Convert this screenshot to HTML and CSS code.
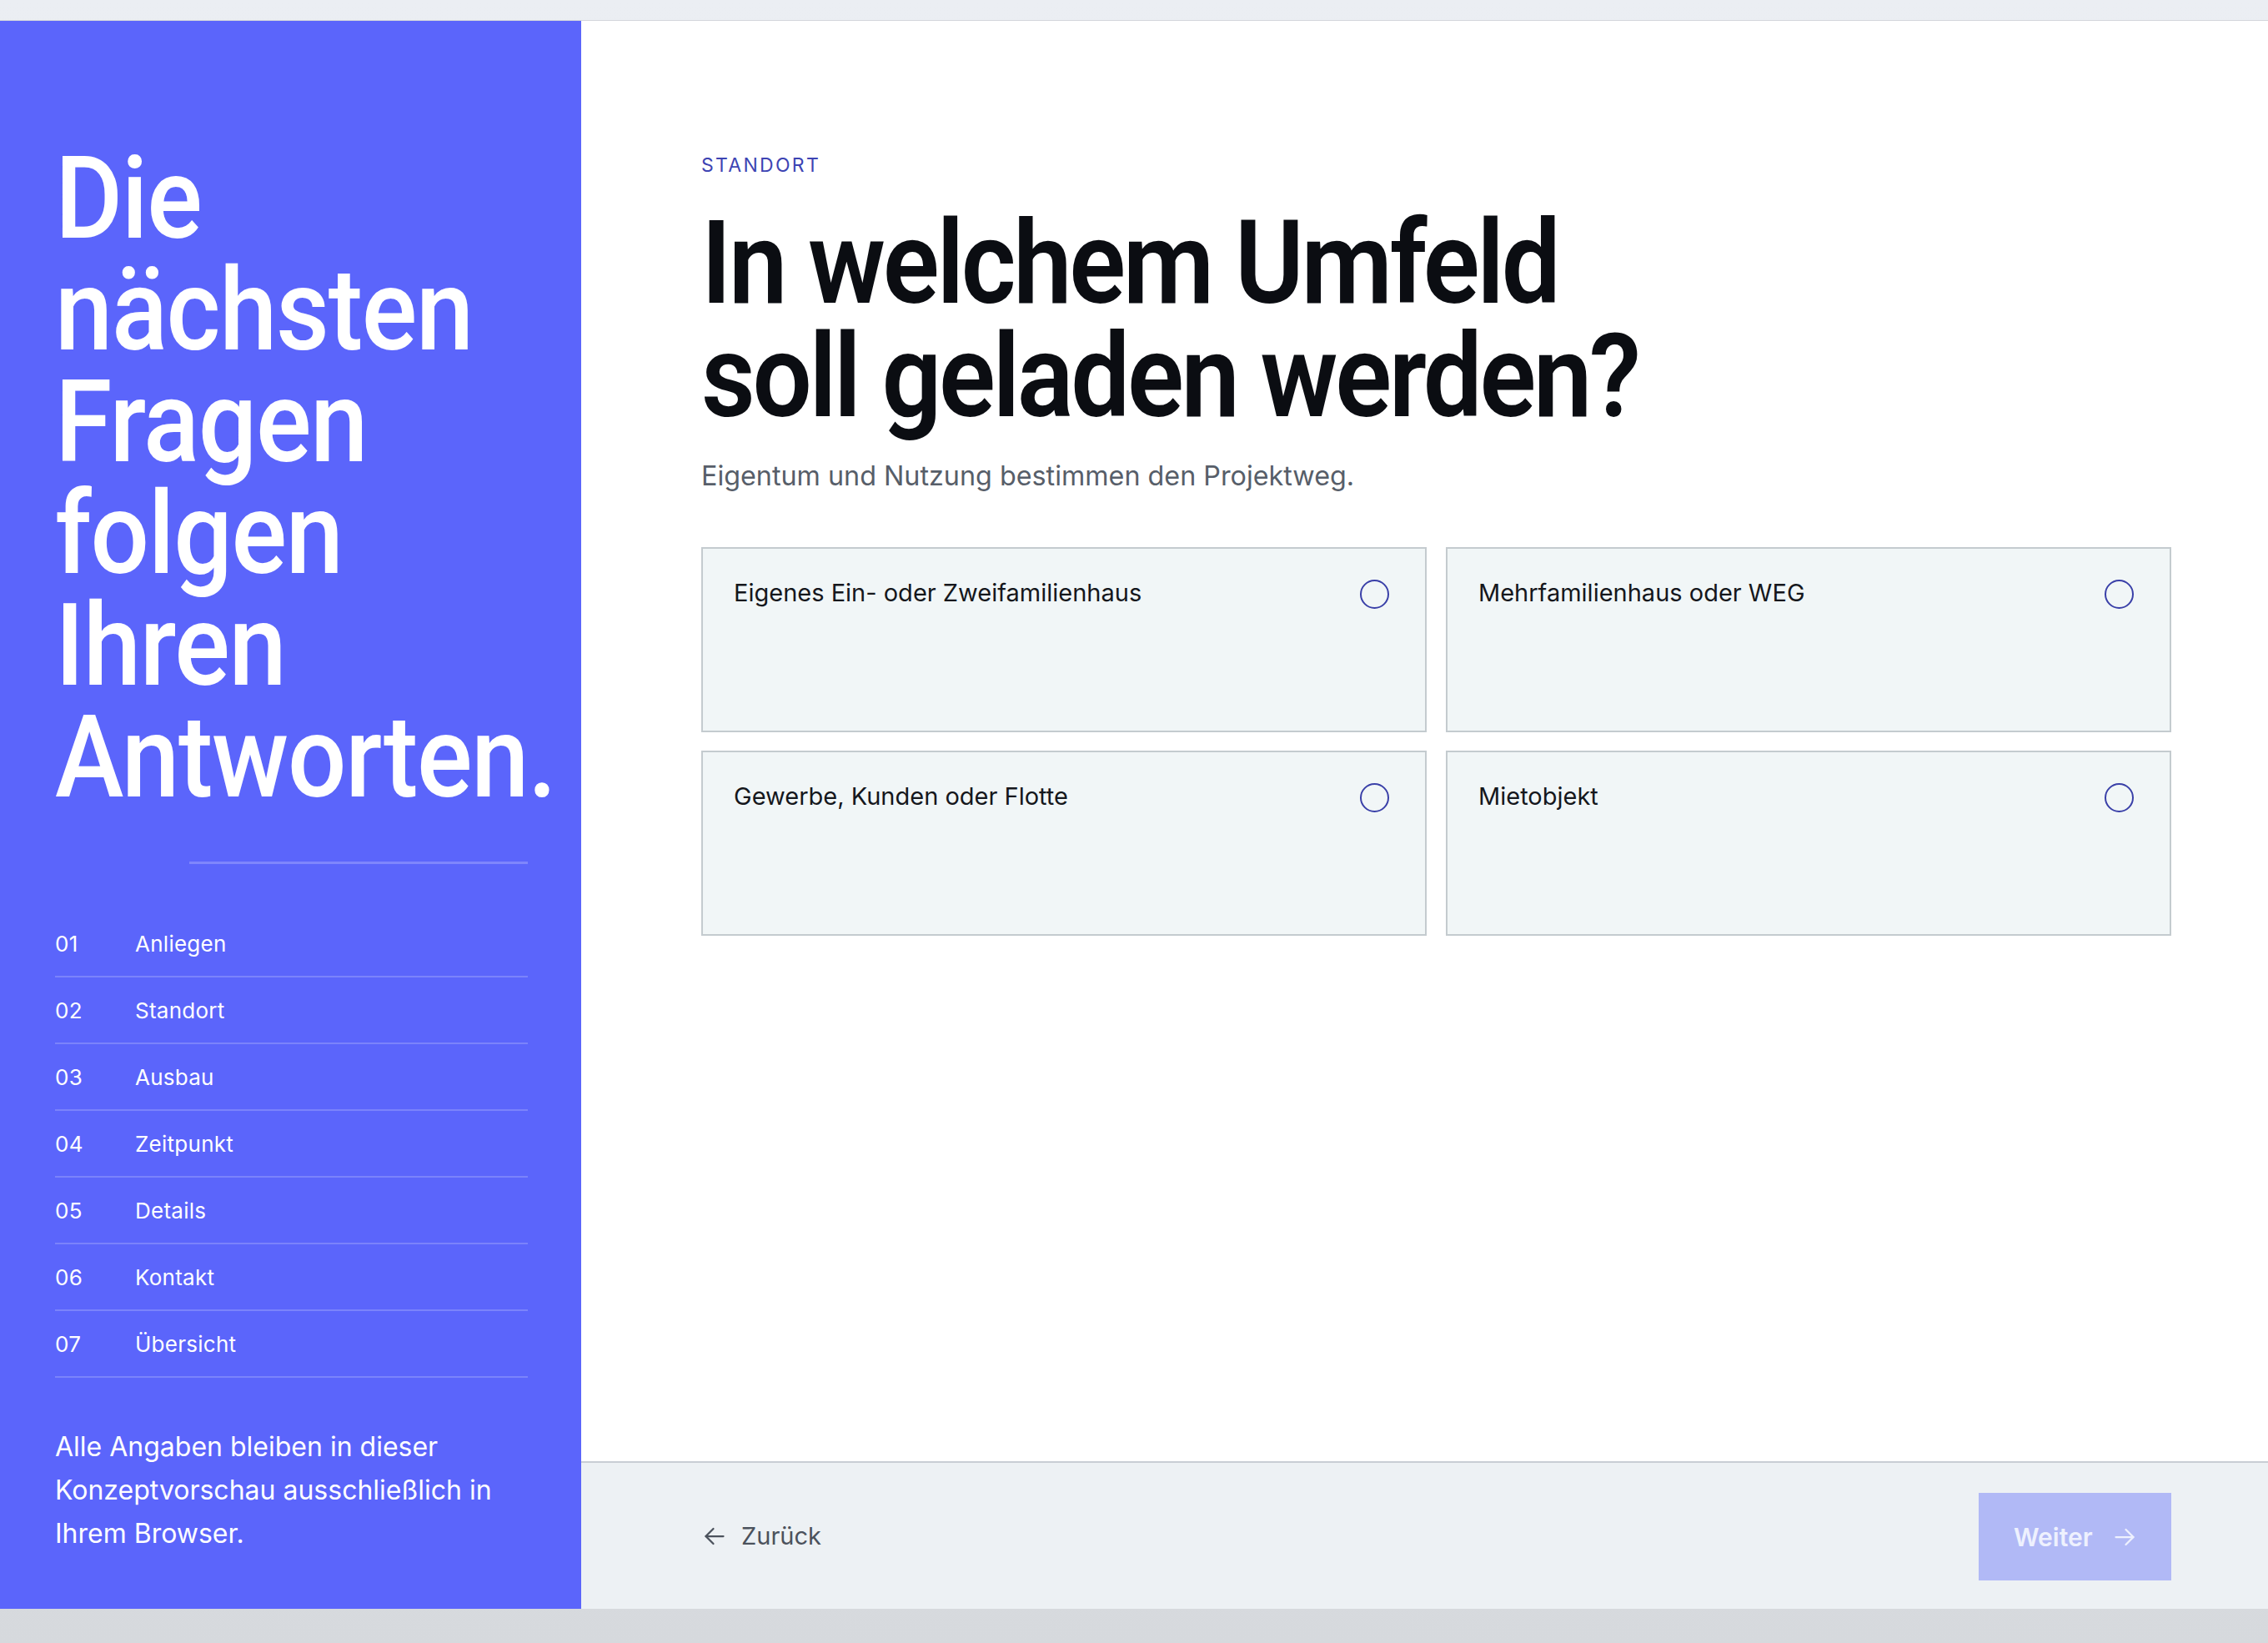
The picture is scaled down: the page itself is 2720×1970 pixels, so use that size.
FILE: index.html
```html
<!DOCTYPE html>
<html lang="de">
<head>
<meta charset="utf-8">
<title>Standort</title>
<link rel="stylesheet" href="styles.css">
</head>
<body>
<div class="frame">
  <aside class="side">
    <h2 class="side-title">Die nächsten Fragen folgen Ihren Antworten.</h2>
    <div class="side-rule"></div>
    <ol class="steps">
      <li class="step"><span class="step-num">01</span><span class="step-label">Anliegen</span></li>
      <li class="step"><span class="step-num">02</span><span class="step-label">Standort</span></li>
      <li class="step"><span class="step-num">03</span><span class="step-label">Ausbau</span></li>
      <li class="step"><span class="step-num">04</span><span class="step-label">Zeitpunkt</span></li>
      <li class="step"><span class="step-num">05</span><span class="step-label">Details</span></li>
      <li class="step"><span class="step-num">06</span><span class="step-label">Kontakt</span></li>
      <li class="step"><span class="step-num">07</span><span class="step-label">Übersicht</span></li>
    </ol>
    <p class="side-note">Alle Angaben bleiben in dieser Konzeptvorschau ausschließlich in Ihrem Browser.</p>
  </aside>
  <main class="main">
    <section class="content">
      <div class="eyebrow">STANDORT</div>
      <h1 class="question">In welchem Umfeld<br>soll geladen werden?</h1>
      <p class="lead">Eigentum und Nutzung bestimmen den Projektweg.</p>
      <div class="options">
        <div class="option"><span class="option-label">Eigenes Ein- oder Zweifamilienhaus</span><span class="radio"></span></div>
        <div class="option"><span class="option-label">Mehrfamilienhaus oder WEG</span><span class="radio"></span></div>
        <div class="option"><span class="option-label">Gewerbe, Kunden oder Flotte</span><span class="radio"></span></div>
        <div class="option"><span class="option-label">Mietobjekt</span><span class="radio"></span></div>
      </div>
    </section>
    <footer class="foot">
      <button class="back" type="button">
        <svg class="icon" viewBox="0 0 24 24" width="36" height="36" fill="none" stroke="currentColor" stroke-width="1.5" stroke-linecap="round" stroke-linejoin="round"><path d="M19 12H5"/><path d="M11 18l-6-6 6-6"/></svg>
        <span>Zurück</span>
      </button>
      <button class="next" type="button" disabled>
        <span>Weiter</span>
        <svg class="icon" viewBox="0 0 24 24" width="36" height="36" fill="none" stroke="currentColor" stroke-width="1.5" stroke-linecap="round" stroke-linejoin="round"><path d="M5 12h14"/><path d="M13 6l6 6-6 6"/></svg>
      </button>
    </footer>
  </main>
</div>
</body>
</html>
```
FILE: styles.css
```css
* { box-sizing: border-box; }

html, body {
  margin: 0;
  height: 1970px;
  overflow: hidden;
}

body {
  padding-top: 24px;
  background: linear-gradient(to bottom, #ebeef3 0%, #e3e6ea 60%, #d6d9dd 100%);
  font-family: Inter, "Noto Sans", sans-serif;
}

.frame {
  display: flex;
  height: 1905px;
  border-top: 1px solid #d3d6db;
  background: #ffffff;
}

/* ---------- sidebar ---------- */
.side {
  width: 697px;
  flex: none;
  background: #5b65fb;
  color: #ffffff;
  display: flex;
  flex-direction: column;
  padding: 146px 64px 64px 66px;
}

.side-title {
  margin: 0;
  font-family: Roboto, "Liberation Sans", sans-serif;
  font-weight: 500;
  font-size: 138px;
  line-height: 134px;
  letter-spacing: -0.01em;
  transform: scaleX(0.9);
  transform-origin: left top;
}

.side-rule {
  margin: 58px 0 0 161px;
  height: 3px;
  background: rgba(255, 255, 255, 0.22);
}

.steps {
  list-style: none;
  margin: 56px 0 0;
  padding: 0;
}

.step {
  display: flex;
  align-items: center;
  height: 80px;
  border-bottom: 2px solid rgba(255, 255, 255, 0.2);
  font-size: 26px;
  letter-spacing: 0.01em;
}

.step-num {
  width: 96px;
  flex: none;
}

.side-note {
  margin: auto 0 0;
  font-size: 32px;
  line-height: 52px;
  max-width: 567px;
}

/* ---------- main ---------- */
.main {
  flex: 1;
  display: flex;
  flex-direction: column;
}

.content {
  flex: 1;
  padding: 161px 116px 0 144px;
}

.eyebrow {
  font-size: 23px;
  line-height: 24px;
  font-weight: 400;
  letter-spacing: 0.1em;
  color: #3d44b3;
}

.question {
  margin: 37px 0 0;
  font-family: Roboto, "Liberation Sans", sans-serif;
  font-weight: 600;
  font-size: 140px;
  line-height: 136px;
  letter-spacing: -0.026em;
  color: #0b0d12;
  transform: scaleX(0.9);
  transform-origin: left top;
}

.lead {
  margin: 30px 0 0;
  font-size: 32.3px;
  line-height: 44px;
  color: #575e69;
}

.options {
  margin-top: 63px;
  display: grid;
  grid-template-columns: 1fr 1fr;
  gap: 22px 23px;
}

.option {
  height: 222px;
  border: 2px solid #c4cbcf;
  background: #f1f6f7;
  padding: 32px 43px 0 37px;
  display: flex;
  justify-content: space-between;
  align-items: flex-start;
}

.option-label {
  font-size: 29px;
  line-height: 42px;
  color: #15171c;
}

.radio {
  width: 35px;
  height: 35px;
  margin-top: 5px;
  border: 2px solid #3a40a8;
  border-radius: 50%;
  flex: none;
}

/* ---------- footer ---------- */
.foot {
  height: 177px;
  flex: none;
  border-top: 2px solid #c9ced4;
  background: #edf1f4;
  display: flex;
  align-items: center;
  justify-content: space-between;
  padding: 0 116px 0 142px;
}

.back, .next {
  font-family: inherit;
  border: 0;
  display: flex;
  align-items: center;
  cursor: pointer;
}

.back {
  background: none;
  padding: 0;
  gap: 14px;
  font-size: 29px;
  color: #4b525c;
}

.next {
  width: 231px;
  height: 105px;
  margin-top: 2px;
  padding: 0 0 0 42px;
  gap: 20px;
  background: #b1b9f6;
  color: #eef1fe;
  font-size: 30px;
  font-weight: 600;
}

.icon { flex: none; }
```
